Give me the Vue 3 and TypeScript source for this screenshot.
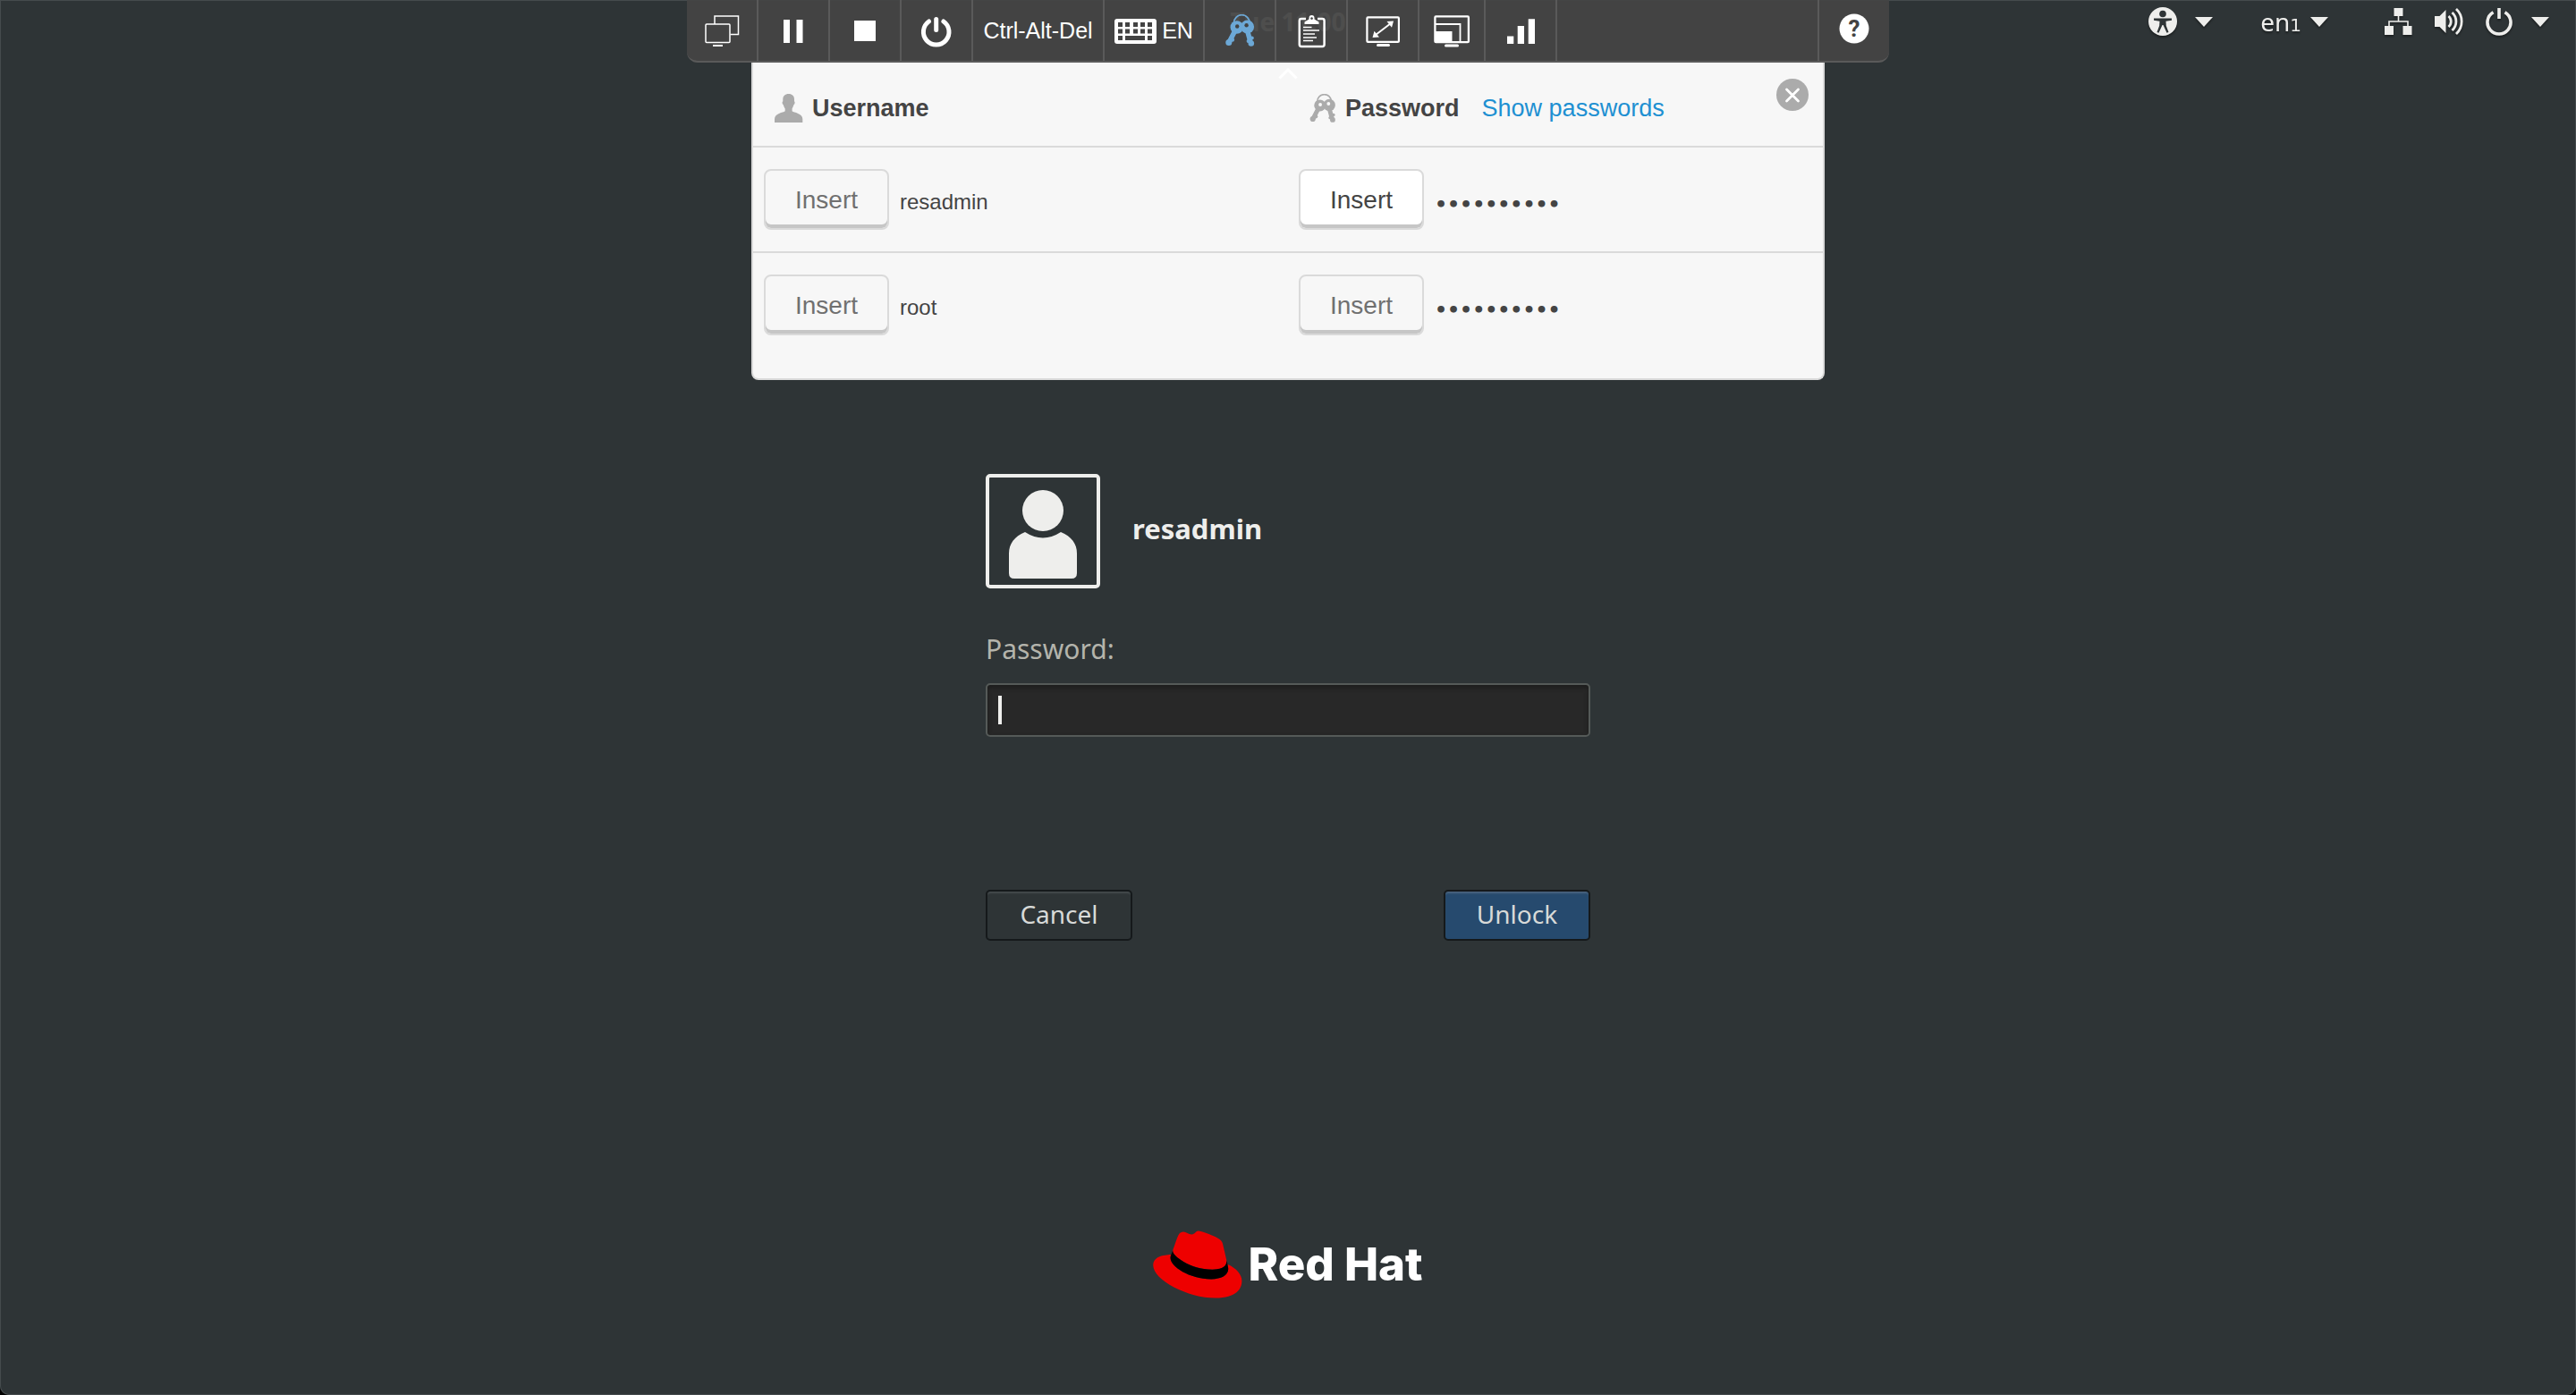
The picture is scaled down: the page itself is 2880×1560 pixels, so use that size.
<script setup lang="ts">
import { ref } from 'vue'

interface Credential {
  user: string
  secret: string
  primary: boolean
}

const credentials: Credential[] = [
  { user: 'resadmin', secret: '••••••••••', primary: true },
  { user: 'root', secret: '••••••••••', primary: false },
]

const keyCols = [4, 12, 21, 29, 37]
const password = ref('')
</script>

<template>
  <div class="desktop">
    <svg class="defs" width="0" height="0" aria-hidden="true">
      <defs>
        <symbol id="keys" viewBox="0 0 33 36">
          <path d="M9.500 9.500a8.800 8.800 0 0 1 17.600 0" fill="none" stroke="currentColor" stroke-width="1.800" />
          <g fill="currentColor">
            <circle cx="12.800" cy="14.500" r="7.300" />
            <circle cx="24.600" cy="14" r="7.500" />
            <circle cx="3.800" cy="31.500" r="3.500" />
            <circle cx="7.800" cy="28.500" r="2.300" />
            <circle cx="28.800" cy="32.500" r="3.300" />
            <circle cx="29.800" cy="26.500" r="2" />
            <circle cx="25.500" cy="30" r="1.900" />
          </g>
          <path d="M11 18L4.500 30.500M24.500 18l3.500 13" fill="none" stroke="currentColor" stroke-width="5.500" />
          <g class="keyhole">
            <circle cx="13.200" cy="13.500" r="2.200" />
            <circle cx="23.600" cy="12.300" r="2.200" />
          </g>
        </symbol>
      </defs>
    </svg>

    <header class="topbar">
      <time class="clock">Tue 11:00</time>
      <div class="status">
        <button class="indicator access" aria-label="Accessibility">
          <svg width="32" height="32" viewBox="0 0 32 32">
            <circle cx="16" cy="16" r="16" fill="#eeeeec" />
            <circle cx="16" cy="7.500" r="3.800" fill="#2e3436" />
            <path d="M6 12.500h20v2.300l-6.500 1 .3 5 2.700 7.200-2 .7-4-8.700h-1l-4 8.700-2-.7 2.700-7.200.3-5-6.500-1z" fill="#2e3436" />
          </svg>
          <i class="caret"></i>
        </button>
        <button class="indicator lang">
          <span>en<small>1</small></span>
          <i class="caret"></i>
        </button>
        <button class="indicator system" aria-label="System menu">
          <svg width="31" height="32" viewBox="0 0 31 32" fill="#eeeeec">
            <path d="M10.500 1h10v9h-10zM0 21h10v10H0zM20.500 21h10v10h-10z" />
            <path d="M15.500 10v6M5 21v-5h21v5" fill="none" stroke="#eeeeec" stroke-width="1.600" />
          </svg>
          <svg width="32" height="32" viewBox="0 0 32 32" fill="#eeeeec">
            <path d="M0 10h5.500l7-7v26l-7-7H0z" />
            <g fill="none" stroke="#eeeeec" stroke-width="2.800">
              <path d="M15.500 10a8 8 0 0 1 0 12" />
              <path d="M19.500 6a13.500 13.500 0 0 1 0 20" />
              <path d="M24 2a19 19 0 0 1 0 28" />
            </g>
          </svg>
          <svg width="30" height="32" viewBox="0 0 30 32" fill="none" stroke="#eeeeec" stroke-width="3.600">
            <path d="M8.500 5.800a13 13 0 1 0 13 0" />
            <path d="M15 1v12" />
          </svg>
          <i class="caret"></i>
        </button>
      </div>
    </header>

    <section class="console">
      <nav class="toolbar">
        <button class="tool" aria-label="Displays">
          <svg width="78" height="68" viewBox="0 0 78 68" fill="none" stroke="#fff" stroke-width="1.500">
            <path d="M31 27v-9h26.500v20.500h-9" />
            <rect x="21" y="27" width="27" height="20.500" rx="1" />
            <path d="M29 51h11" stroke-width="2" />
          </svg>
        </button>
        <button class="tool" aria-label="Pause">
          <svg width="78" height="68" viewBox="0 0 78 68" fill="#fff"><path d="M28 22h7v26h-7zM42.500 22h7v26h-7z" /></svg>
        </button>
        <button class="tool" aria-label="Stop">
          <svg width="78" height="68" viewBox="0 0 78 68" fill="#fff"><path d="M27 23h24v23H27z" /></svg>
        </button>
        <button class="tool" aria-label="Power">
          <svg width="78" height="68" viewBox="0 0 78 68" fill="none" stroke="#fff" stroke-width="5" stroke-linecap="round">
            <path d="M30.500 24a14.300 14.300 0 1 0 16.400 0" />
            <path d="M38.700 21.500v12" />
          </svg>
        </button>
        <button class="tool label">Ctrl-Alt-Del</button>
        <button class="tool keyboard">
          <svg width="48" height="68" viewBox="0 0 48 68">
            <rect y="21" width="47" height="28" rx="3" fill="#fff" />
            <g class="hole">
              <rect v-for="x in keyCols" :key="`a${x}`" :x="x" y="25" width="5" height="5" />
              <rect v-for="x in keyCols" :key="`b${x}`" :x="x" y="32.500" width="5" height="5" />
              <rect x="4" y="40" width="5" height="5" />
              <rect x="12" y="40" width="22" height="5" />
              <rect x="37" y="40" width="5" height="5" />
            </g>
          </svg>
          EN
        </button>
        <button class="tool active" aria-label="Credentials">
          <svg width="33" height="36"><use href="#keys" /></svg>
        </button>
        <button class="tool" aria-label="Clipboard">
          <svg width="78" height="68" viewBox="0 0 78 68" fill="none" stroke="#fff">
            <path d="M33 21h-5q-2.200 0-2.200 2.200v26.600q0 2.200 2.200 2.200h23.400q2.200 0 2.200-2.200V23.200q0-2.200-2.200-2.200H46" stroke-width="2.500" />
            <path fill="#fff" stroke="none" fill-rule="evenodd" d="M31.500 27v-2.500l5-3v-1.500a3 3 0 0 1 6 0v1.500l5 3V27zM39.500 19.200a1.400 1.400 0 1 0 .1 0z" />
            <path d="M30 30.500h9.500M30 34h18M30 38h13M30 42h15M30 45.500h11" stroke-width="1.300" />
          </svg>
        </button>
        <button class="tool" aria-label="Full screen">
          <svg width="78" height="68" viewBox="0 0 78 68" fill="none" stroke="#fff" stroke-width="2.200">
            <rect x="21.400" y="19.400" width="35.500" height="27.500" rx="1" />
            <path d="M31 39l17-13" stroke-width="2" />
            <path d="M43.500 24l7.500-.5-2 7.300zM35 41.500l-7.500.5 2-7.300z" fill="#fff" stroke="none" />
            <path d="M33.500 50.500h12" stroke-width="3" stroke-linecap="round" />
          </svg>
        </button>
        <button class="tool narrow" aria-label="Scale">
          <svg width="72" height="68" viewBox="0 0 72 68" fill="none" stroke="#fff" stroke-width="2.300">
            <rect x="17.400" y="18.400" width="37.500" height="28.800" rx="1" />
            <path d="M18 27h27.500v20" stroke-width="1.800" />
            <path d="M17 35h19.500v12H17z" fill="#fff" stroke="none" />
            <path d="M29.500 51h13" stroke-width="3" stroke-linecap="round" />
          </svg>
        </button>
        <button class="tool" aria-label="Statistics">
          <svg width="78" height="68" viewBox="0 0 78 68" fill="#fff"><path d="M24 40.500h7.300V49H24zM35.700 29h7.300v20h-7.300zM47.700 21.300H55V49h-7.300z" /></svg>
        </button>
        <span class="filler"></span>
        <button class="tool last" aria-label="Help">
          <svg width="78" height="68" viewBox="0 0 78 68">
            <circle cx="39" cy="32" r="16.500" fill="#fff" />
            <text x="39" y="41" class="question">?</text>
          </svg>
        </button>
      </nav>

      <div class="panel">
        <svg class="chevron" width="22" height="13" viewBox="0 0 22 13"><path d="M1.500 11.500L11 2l9.500 9.500" fill="none" stroke="#fff" stroke-width="3" /></svg>
        <button class="close" aria-label="Close">
          <svg width="36" height="36" viewBox="0 0 36 36">
            <circle cx="18" cy="18" r="18" fill="#ababab" />
            <path d="M11.500 12l13 13M24.500 12l-13 13" stroke="#fff" stroke-width="2.800" stroke-linecap="round" />
          </svg>
        </button>
        <table>
          <thead>
            <tr>
              <th scope="col">
                <div class="head">
                  <svg width="32" height="32" viewBox="0 0 32 32" fill="#ababab">
                    <path d="M15.700 0c4 0 6.300 2.400 6.300 6v2.300c1 .3.900 3.200-.6 4-.5 2-1.400 3.200-1.800 4.200v2.700c2 1.800 11.700 2.300 11.700 8.800v4H0v-4c0-6.500 9.500-7 11.700-8.800v-2.700c-.5-1-1.500-2.200-1.900-4.200-1.500-.8-1.600-3.700-.5-4V6c0-3.600 2.400-6 6.400-6z" />
                  </svg>
                  Username
                </div>
              </th>
              <th scope="col">
                <div class="head">
                  <svg class="grey" width="30" height="32"><use href="#keys" /></svg>
                  Password
                  <a href="#show">Show passwords</a>
                </div>
              </th>
            </tr>
          </thead>
          <tbody>
            <tr v-for="c in credentials" :key="c.user">
              <td>
                <div class="entry"><button class="insert">Insert</button><span>{{ c.user }}</span></div>
              </td>
              <td>
                <div class="entry">
                  <button class="insert" :class="{ primary: c.primary }">Insert</button><span class="dots">{{ c.secret }}</span>
                </div>
              </td>
            </tr>
          </tbody>
        </table>
      </div>
    </section>

    <main class="login">
      <form class="form" @submit.prevent>
        <div class="user">
          <svg class="avatar" width="128" height="128" viewBox="0 0 128 128">
            <rect x="2" y="2" width="124" height="124" rx="3" fill="none" stroke="#eeeeec" stroke-width="4" />
            <circle cx="64" cy="41" r="23" fill="#eeeeec" />
            <path d="M44 65q20 13 40 0c12 5 18 13 18 24v22q0 6-6 6H32q-6 0-6-6V89c0-11 6-19 18-24z" fill="#eeeeec" />
          </svg>
          <strong>resadmin</strong>
        </div>
        <label for="password">Password:</label>
        <div class="field">
          <input id="password" v-model="password" type="password" />
          <span class="cursor"></span>
        </div>
        <div class="actions">
          <button type="button" class="action">Cancel</button>
          <button type="submit" class="action unlock">Unlock</button>
        </div>
      </form>
    </main>

    <footer class="brand">
      <svg width="100" height="76" viewBox="0 0 192 145">
        <path fill="#e00" d="M127.470 83.490c12.510 0 30.610-2.580 30.610-17.460a14 14 0 0 0-.31-3.420l-7.450-32.360c-1.720-7.120-3.230-10.350-15.730-16.600C124.890 8.690 103.760.5 97.510.5 91.690.5 90 8 83.060 8c-6.680 0-11.640-5.600-17.890-5.600-6 0-9.910 4.090-12.930 12.500 0 0-8.410 23.720-9.490 27.160A6.430 6.430 0 0 0 42.530 44c0 9.220 36.300 39.450 84.940 39.450M160 72.070c1.730 8.190 1.730 9.050 1.730 10.130 0 14-15.740 21.770-36.430 21.770C78.540 104 37.580 76.600 37.580 58.490a18.450 18.450 0 0 1 1.510-7.330C22.270 52 .5 55 .5 74.220c0 31.480 74.590 70.280 133.650 70.280 45.280 0 56.700-20.480 56.700-36.650 0-12.720-11-27.160-30.830-35.780" />
        <path d="M160 72.070c1.730 8.190 1.730 9.050 1.730 10.130 0 14-15.740 21.770-36.430 21.770C78.540 104 37.580 76.600 37.580 58.490a18.450 18.450 0 0 1 1.510-7.330l3.660-9.060A6.430 6.430 0 0 0 42.530 44c0 9.220 36.300 39.450 84.940 39.450 12.510 0 30.610-2.580 30.610-17.460a14 14 0 0 0-.31-3.420z" />
      </svg>
      <span>Red Hat</span>
    </footer>
  </div>
</template>

<style>
body {
  background: #000;
}
</style>

<style scoped>
.desktop {
  position: relative;
  display: flex;
  flex-direction: column;
  box-sizing: border-box;
  min-height: 100vh;
  overflow: hidden;
  border-radius: 0 0 10px 10px;
  background: #2e3436;
  box-shadow: inset 0 0 0 1px #454b4d;
  color: #eeeeec;
  font-family: "Noto Sans", sans-serif;
}

.defs {
  position: absolute;
}

button {
  margin: 0;
  padding: 0;
  border: 0;
  background: none;
  color: inherit;
  font: inherit;
}

svg {
  display: block;
  flex: none;
}

/* GNOME top bar */
.topbar {
  display: grid;
  grid-template-rows: 48px;
  grid-template-columns: 1fr auto 1fr;
  align-items: center;
}

.clock {
  grid-column: 2;
  font-size: 28px;
  font-weight: 700;
  line-height: 44px;
}

.status {
  display: flex;
  align-items: center;
  justify-content: flex-end;
  height: 48px;
  padding-right: 30px;
}

.indicator {
  display: flex;
  align-items: center;
  height: 48px;
  filter: drop-shadow(0 2px 1px rgba(0, 0, 0, 0.4));
}

.access {
  gap: 20px;
  margin-right: 53px;
}

.lang {
  gap: 10px;
  margin-right: 63px;
  font-size: 28px;
  line-height: 46px;
}

.lang small {
  font-family: "DejaVu Sans", sans-serif;
  font-size: 20px;
  line-height: 20px;
}

.system {
  gap: 25px;
}

.system .caret {
  margin-left: -4px;
}

.caret {
  border-top: 11px solid #eeeeec;
  border-right: 10px solid transparent;
  border-left: 10px solid transparent;
}

/* Remote console overlay */
.console {
  position: absolute;
  top: 0;
  left: 50%;
  width: 1344px;
  transform: translateX(-50%);
  font-family: "Liberation Sans", sans-serif;
}

.toolbar {
  display: flex;
  height: 68px;
  overflow: hidden;
  border-bottom: 2px solid #5a5a5a;
  border-radius: 0 0 12px 12px;
  background: rgba(68, 68, 68, 0.95);
  color: #fff;
  font-size: 25px;
}

.tool {
  display: flex;
  flex: none;
  align-items: center;
  justify-content: center;
  box-sizing: border-box;
  width: 80px;
  border-right: 2px solid #5a5a5a;
}

.tool.label {
  width: 147px;
}

.tool.keyboard {
  gap: 5px;
  width: 112px;
}

.tool.narrow {
  width: 74px;
}

.tool.active {
  --keyhole: #434343;
  color: #6ca8d6;
}

.tool.last {
  width: 78px;
  border-right: 0;
}

.keyhole {
  fill: var(--keyhole);
}

.hole {
  fill: #434343;
}

.question {
  fill: #434343;
  font: 700 26px Roboto, sans-serif;
  text-anchor: middle;
}

.filler {
  flex: 1;
  border-right: 2px solid #5a5a5a;
}

.panel {
  position: relative;
  box-sizing: border-box;
  margin: 0 72px;
  padding-bottom: 24px;
  border: 2px solid #dadada;
  border-top: 0;
  border-radius: 0 0 8px 8px;
  background: #f7f7f7;
  color: #444;
}

.chevron {
  position: absolute;
  top: 6px;
  left: 587px;
}

.close {
  position: absolute;
  top: 18px;
  right: 16px;
}

table {
  width: 100%;
  border-collapse: collapse;
  table-layout: fixed;
}

th,
td {
  padding: 0;
  text-align: left;
}

.head {
  display: flex;
  align-items: center;
  gap: 10px;
  height: 84px;
  padding: 9px 0 0 24px;
  font-size: 27px;
  font-weight: 700;
}

.head a {
  margin-left: 15px;
  color: #1e90d2;
  font-weight: 400;
  text-decoration: none;
}

.grey {
  --keyhole: #f7f7f7;
  color: #ababab;
}

.entry {
  display: flex;
  align-items: center;
  gap: 12px;
  height: 116px;
  padding-left: 12px;
  border-top: 2px solid #dadada;
  font-size: 24px;
}

.entry span {
  padding-top: 5px;
}

.insert {
  box-sizing: border-box;
  width: 140px;
  height: 68px;
  padding-top: 2px;
  border: 2px solid #dadada;
  border-radius: 8px;
  box-shadow: inset 0 -4px 0 #c6c6c6;
  color: #707070;
  font-size: 28px;
}

.insert.primary {
  background: #fff;
  color: #444;
}

.entry .dots {
  padding-top: 10px;
  font: 700 22px "DejaVu Sans", sans-serif;
}

/* Lock screen */
.login {
  display: flex;
  justify-content: center;
  padding-top: 482px;
}

.form {
  display: flex;
  flex-direction: column;
  width: 676px;
}

.user {
  display: flex;
  align-items: center;
  gap: 36px;
  font-size: 31px;
}

.user strong {
  margin-bottom: 6px;
}

label {
  margin-top: 47px;
  color: #b4b4ac;
  font-size: 30px;
  line-height: 42px;
}

.field {
  position: relative;
  margin-top: 17px;
}

input {
  display: block;
  box-sizing: border-box;
  width: 100%;
  height: 60px;
  padding: 0 14px;
  border: 2px solid #555a58;
  border-radius: 5px;
  outline: 0;
  background: #282828;
  box-shadow: inset 0 3px 5px #1c1c1c;
  color: #eeeeec;
  font-size: 30px;
}

.cursor {
  position: absolute;
  top: 14px;
  left: 14px;
  width: 4px;
  height: 32px;
  background: #eeeeec;
}

.actions {
  display: flex;
  justify-content: space-between;
  margin-top: 171px;
}

.action {
  box-sizing: border-box;
  width: 164px;
  height: 57px;
  padding-bottom: 3px;
  border: 2px solid #15191b;
  border-radius: 5px;
  box-shadow: inset 0 3px 2px -1px #454b4d;
  color: #d8dad8;
  font-size: 28px;
  line-height: 48px;
}

.action.unlock {
  background: #264a6e;
  box-shadow: inset 0 3px 2px -1px #4a637e;
}

.brand {
  display: flex;
  align-items: center;
  justify-content: center;
  gap: 6px;
  margin-top: auto;
  padding-bottom: 108px;
  color: #fff;
  font: 800 51px/76px Inter, sans-serif;
}
</style>
